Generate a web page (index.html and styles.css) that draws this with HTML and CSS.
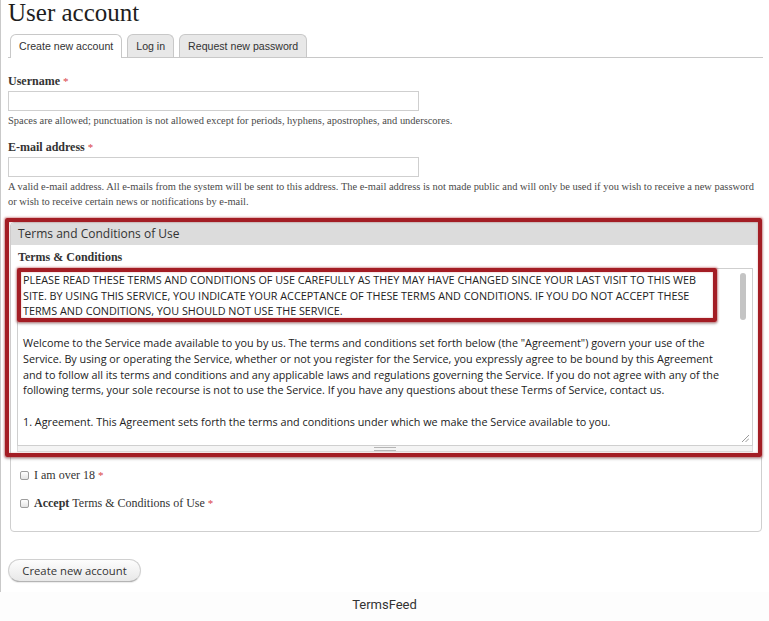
FILE: index.html
```html
<!DOCTYPE html>
<html lang="en">
<head>
<meta charset="utf-8">
<title>User account</title>
<link rel="stylesheet" href="styles.css">
</head>
<body>
<div class="shot">
  <main class="page">
    <h1 class="title">User account</h1>
    <ul class="tabs">
      <li class="tab active">Create new account</li>
      <li class="tab">Log in</li>
      <li class="tab">Request new password</li>
    </ul>
    <form class="register">
      <div class="item item-name">
        <label class="label" for="name">Username <span class="req">*</span></label>
        <input class="text" id="name" type="text">
        <div class="desc">Spaces are allowed; punctuation is not allowed except for periods, hyphens, apostrophes, and underscores.</div>
      </div>
      <div class="item item-mail">
        <label class="label" for="mail">E-mail address <span class="req">*</span></label>
        <input class="text" id="mail" type="text">
        <div class="desc">A valid e-mail address. All e-mails from the system will be sent to this address. The e-mail address is not made public and will only be used if you wish to receive a new password or wish to receive certain news or notifications by e-mail.</div>
      </div>
      <div class="fieldset">
        <div class="hl">
          <div class="fs-legend">Terms and Conditions of Use</div>
          <div class="fs-body">
            <div class="label label-terms">Terms &amp; Conditions</div>
            <div class="terms">
              <p class="caps">PLEASE READ THESE TERMS AND CONDITIONS OF USE CAREFULLY AS THEY MAY HAVE CHANGED SINCE YOUR LAST VISIT TO THIS WEB SITE. BY USING THIS SERVICE, YOU INDICATE YOUR ACCEPTANCE OF THESE TERMS AND CONDITIONS. IF YOU DO NOT ACCEPT THESE TERMS AND CONDITIONS, YOU SHOULD NOT USE THE SERVICE.</p>
              <p>Welcome to the Service made available to you by us. The terms and conditions set forth below (the "Agreement") govern your use of the Service. By using or operating the Service, whether or not you register for the Service, you expressly agree to be bound by this Agreement and to follow all its terms and conditions and any applicable laws and regulations governing the Service. If you do not agree with any of the following terms, your sole recourse is not to use the Service. If you have any questions about these Terms of Service, contact us.</p>
              <p>1. Agreement. This Agreement sets forth the terms and conditions under which we make the Service available to you.</p>
              <span class="thumb"></span>
              <svg class="resize" width="8" height="8" viewBox="0 0 8 8"><path d="M1 8 L8 1 M4.5 8 L8 4.5" stroke="#9a9a9a" stroke-width="1" fill="none"/></svg>
            </div>
            <div class="grippie"><span class="grip"></span></div>
          </div>
        </div>
        <label class="check"><input type="checkbox"> I am over 18 <span class="req">*</span></label>
        <label class="check check-accept"><input type="checkbox"> <b>Accept</b>&nbsp;Terms &amp; Conditions of Use <span class="req">*</span></label>
      </div>
      <button class="btn" type="button">Create new account</button>
    </form>
  </main>
  <footer class="caption">TermsFeed</footer>
</div>
</body>
</html>
```
FILE: styles.css
```css
* { box-sizing: border-box; }

html, body { margin: 0; padding: 0; }

body {
  width: 769px;
  height: 621px;
  overflow: hidden;
  background: #fdfdfd;
  font-family: "Liberation Serif", "Times New Roman", serif;
  color: #333;
}

.page {
  height: 592px;
  border-left: 1px solid #c9c9c9;
  padding: 0 6px 0 7px;
  background: #fff;
}

.title {
  margin: 0;
  font-size: 25px;
  line-height: 26px;
  font-weight: normal;
  color: #1e1e1e;
}

/* primary tabs */
.tabs {
  list-style: none;
  display: flex;
  align-items: flex-start;
  gap: 5px;
  height: 24px;
  margin: 8px 0 0;
  padding: 0 0 0 2px;
  border-bottom: 1px solid #c8c8c8;
}

.tab {
  height: 23px;
  padding: 0 8px;
  border: 1px solid #c8c8c8;
  border-bottom: 0;
  border-radius: 6px 6px 0 0;
  background: #e8e8e8;
  font-family: "Liberation Sans", Arial, sans-serif;
  font-size: 10.6px;
  line-height: 22px;
  color: #333;
  white-space: nowrap;
}

.tab.active {
  height: 24px;
  background: #fff;
}

/* form items */
.label {
  display: block;
  font-weight: bold;
  font-size: 12px;
  line-height: 15px;
  color: #333;
}

.req {
  color: #d9434a;
  font-weight: normal;
  font-size: 11px;
}

.item-name { margin-top: 15.5px; }
.item-name .text { margin-top: 2.5px; }

.item-mail { margin-top: 11.5px; }
.item-mail .text { margin-top: 2.5px; }

.text {
  display: block;
  width: 411px;
  height: 20px;
  padding: 0 4px;
  border: 1px solid #cfcfcf;
  background: #fff;
}

.desc {
  margin-top: 2px;
  font-size: 10.45px;
  line-height: 15px;
  color: #4a4a4a;
}

/* fieldset */
.fieldset {
  margin: 13px 1px 0 2px;
  padding: 0 0 20px;
  border: 1px solid #cfcfcf;
  border-radius: 4px;
}

.hl { position: relative; }

/* highlight frame drawn over the terms section */
.hl::after,
.caps::after {
  content: "";
  position: absolute;
  border: 4px solid #a31d24;
  border-radius: 2px;
  box-shadow: 0 0 2px 1px rgba(180, 50, 55, 0.45), 0 2px 3px rgba(0, 0, 0, 0.25), inset 0 0 2px rgba(180, 50, 55, 0.45);
  pointer-events: none;
}

.hl::after { top: -5px; right: -1px; bottom: -5px; left: -6px; }

.fs-legend {
  height: 22px;
  padding-left: 7px;
  border-radius: 3px 3px 0 0;
  background: #dcdcdc;
  font-family: "Open Sans", sans-serif;
  font-size: 12px;
  line-height: 22px;
  color: #333;
}

.fs-body { padding: 5px 8px 0 6px; }

.label-terms { padding-left: 1px; }

.terms {
  position: relative;
  height: 178px;
  margin-top: 3px;
  padding: 3px 21px 0 3px;
  border: 1px solid #cfcfcf;
  background: #fff;
  font-family: "Open Sans", sans-serif;
  font-size: 10.8px;
  line-height: 15.7px;
  color: #222;
}

.terms p {
  margin: 0 0 16px;
  padding-left: 2px;
}

.terms .caps {
  position: relative;
  margin-right: 18px;
}

.caps::after { top: -4px; right: -4px; bottom: -3px; left: -4px; }

.thumb {
  position: absolute;
  top: 4px;
  right: 6px;
  width: 6px;
  height: 47px;
  border-radius: 3px;
  background: #c4c4c4;
}

.resize {
  position: absolute;
  right: 3px;
  bottom: 3px;
}

.grippie {
  display: flex;
  justify-content: center;
  align-items: center;
  height: 6px;
  border: 1px solid #dcdcdc;
  border-top: 0;
  background: #f4f4f4;
}

.grip {
  width: 22px;
  height: 4px;
  border-top: 1px solid #b5b5b5;
  border-bottom: 1px solid #b5b5b5;
}

/* checkboxes */
.check {
  display: flex;
  align-items: center;
  margin: 15.5px 0 0 9px;
  font-size: 12px;
  line-height: 15px;
  color: #333;
}

.check-accept { margin-top: 13px; }

.check input {
  appearance: none;
  width: 9px;
  height: 9px;
  margin: 0 5px 0 0;
  border: 1px solid #9d9d9d;
  border-radius: 2px;
  background: linear-gradient(#fff, #e4e4e4);
}

.check .req { margin-left: 3px; }

.check b { font-weight: bold; }

/* submit */
.btn {
  display: block;
  width: 133px;
  height: 23px;
  margin-top: 27px;
  padding: 0;
  border: 1px solid #d0d0d0;
  border-bottom-color: #b4b4b4;
  border-radius: 12px;
  background: linear-gradient(#fdfdfd, #e8e8e8);
  box-shadow: 0 1px 1px rgba(0, 0, 0, 0.08);
  font-family: "Open Sans", sans-serif;
  font-size: 11.3px;
  color: #333;
  text-align: center;
}

.caption {
  height: 29px;
  text-align: center;
  font-family: Roboto, "Liberation Sans", sans-serif;
  font-size: 13px;
  line-height: 26px;
  color: #333;
}
```
